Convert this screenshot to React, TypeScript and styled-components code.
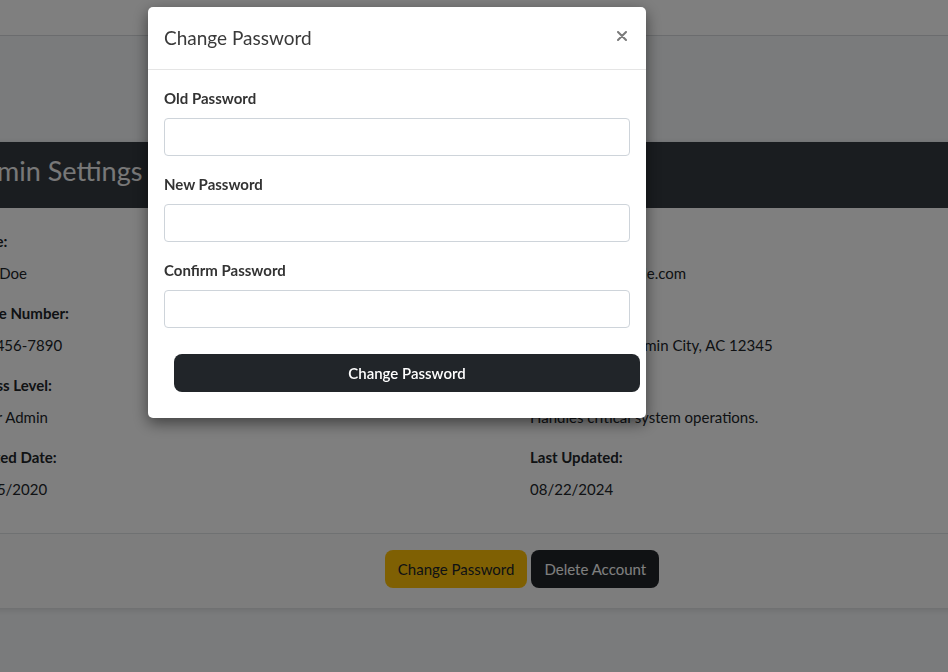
import React from "react";
import styled, { createGlobalStyle } from "styled-components";

const GlobalStyle = createGlobalStyle`
  html, body {
    margin: 0;
    padding: 0;
    overflow: hidden;
  }
  body {
    background-color: #f5f7f9;
    font-family: Lato, "Noto Sans", "Liberation Sans", sans-serif;
    color: #212529;
  }
  * {
    box-sizing: border-box;
  }
`;

const Page = styled.div`
  min-height: 672px;
`;

const Navbar = styled.nav`
  height: 36px;
  background-color: #ffffff;
  border-bottom: 1px solid #d6d9dc;
`;

const Main = styled.main`
  padding-top: 105px;
`;

const Card = styled.section`
  width: 1172px;
  margin-left: -56px;
  background-color: #ffffff;
  border-top: 1px solid #e9ecef;
  box-shadow: 0 2px 6px rgba(0, 0, 0, 0.12);
`;

const CardHeader = styled.header`
  background-color: #343a40;
  padding: 12px 20px 20px;
`;

const CardTitle = styled.h2`
  margin: 0;
  font-size: 27px;
  font-weight: 400;
  line-height: 34px;
  color: #f1f1f1;
`;

const CardBody = styled.div`
  display: grid;
  grid-template-columns: 1fr 1fr;
  padding: 21px 20px 16px;
`;

const Column = styled.div`
  display: flex;
  flex-direction: column;
`;

const FieldLabel = styled.div`
  font-size: 15px;
  font-weight: 700;
  line-height: 24px;
  margin-bottom: 8px;
`;

const FieldValue = styled.div`
  font-size: 15px;
  line-height: 24px;
  margin-bottom: 16px;
`;

const CardFooter = styled.footer`
  display: flex;
  justify-content: center;
  gap: 4px;
  padding: 16px 16px 20px 0;
  border-top: 1px solid #dfe2e5;
  background-color: #fafafa;
`;

const Button = styled.button<{ $variant: "warning" | "dark" }>`
  height: 38px;
  padding: 0 13px;
  border: none;
  border-radius: 8px;
  font-family: inherit;
  font-size: 15px;
  background-color: ${(p) => (p.$variant === "warning" ? "#ffc107" : "#212529")};
  color: ${(p) => (p.$variant === "warning" ? "#212529" : "#ffffff")};
`;

const Backdrop = styled.div`
  position: fixed;
  inset: 0;
  background-color: rgba(0, 0, 0, 0.5);
`;

const Modal = styled.div`
  position: fixed;
  top: 7px;
  left: 148px;
  width: 498px;
  background-color: #ffffff;
  border-radius: 5px;
  box-shadow: 0 5px 15px rgba(0, 0, 0, 0.5);
`;

const ModalHeader = styled.div`
  display: flex;
  align-items: center;
  justify-content: space-between;
  padding: 16px;
  border-bottom: 1px solid #e5e5e5;
`;

const ModalTitle = styled.h3`
  margin: 0;
  font-size: 19px;
  font-weight: 400;
  line-height: 30px;
  color: #3a3a3a;
`;

const CloseButton = styled.button`
  display: flex;
  align-items: center;
  justify-content: center;
  width: 20px;
  height: 20px;
  margin-right: -2px;
  margin-top: -4px;
  padding: 0;
  border: none;
  background: none;
  color: #7a7a7a;
`;

const ModalBody = styled.form`
  display: flex;
  flex-direction: column;
  padding: 16px;
`;

const FormGroup = styled.div`
  margin-bottom: 16px;
`;

const FormLabel = styled.label`
  display: block;
  font-size: 15px;
  font-weight: 700;
  line-height: 24px;
  margin-bottom: 8px;
  color: #333333;
`;

const Input = styled.input`
  display: block;
  width: 100%;
  height: 38px;
  padding: 6px 12px;
  border: 1px solid #ced4da;
  border-radius: 4px;
  font-family: inherit;
  font-size: 15px;
`;

const SubmitButton = styled.button`
  display: block;
  width: 100%;
  height: 38px;
  margin: 10px;
  border: none;
  border-radius: 8px;
  background-color: #212529;
  color: #ffffff;
  font-family: inherit;
  font-size: 15px;
  font-weight: 600;
`;

const leftFields = [
  { label: "Name:", value: "John Doe" },
  { label: "Phone Number:", value: "123-456-7890" },
  { label: "Access Level:", value: "Super Admin" },
  { label: "Created Date:", value: "01/15/2020" },
];

const rightFields = [
  { label: "Email:", value: "john.doe@example.com" },
  { label: "Address:", value: "123 Admin St, Admin City, AC 12345" },
  { label: "Description:", value: "Handles critical system operations." },
  { label: "Last Updated:", value: "08/22/2024" },
];

const passwordFields = ["Old Password", "New Password", "Confirm Password"];

const FieldColumn = ({ fields }: { fields: { label: string; value: string }[] }) => (
  <Column>
    {fields.map((f) => (
      <React.Fragment key={f.label}>
        <FieldLabel>{f.label}</FieldLabel>
        <FieldValue>{f.value}</FieldValue>
      </React.Fragment>
    ))}
  </Column>
);

export default function App() {
  return (
    <Page>
      <GlobalStyle />
      <Navbar />
      <Main>
        <Card>
          <CardHeader>
            <CardTitle>Admin Settings</CardTitle>
          </CardHeader>
          <CardBody>
            <FieldColumn fields={leftFields} />
            <FieldColumn fields={rightFields} />
          </CardBody>
          <CardFooter>
            <Button $variant="warning">Change Password</Button>
            <Button $variant="dark">Delete Account</Button>
          </CardFooter>
        </Card>
      </Main>

      <Backdrop />
      <Modal>
        <ModalHeader>
          <ModalTitle>Change Password</ModalTitle>
          <CloseButton type="button" aria-label="Close">
            <svg width="10" height="10" viewBox="0 0 10 10">
              <path d="M1 1L9 9M9 1L1 9" stroke="currentColor" strokeWidth="2" strokeLinecap="round" />
            </svg>
          </CloseButton>
        </ModalHeader>
        <ModalBody onSubmit={(e) => e.preventDefault()}>
          {passwordFields.map((name) => (
            <FormGroup key={name}>
              <FormLabel>{name}</FormLabel>
              <Input type="password" />
            </FormGroup>
          ))}
          <SubmitButton type="submit">Change Password</SubmitButton>
        </ModalBody>
      </Modal>
    </Page>
  );
}
